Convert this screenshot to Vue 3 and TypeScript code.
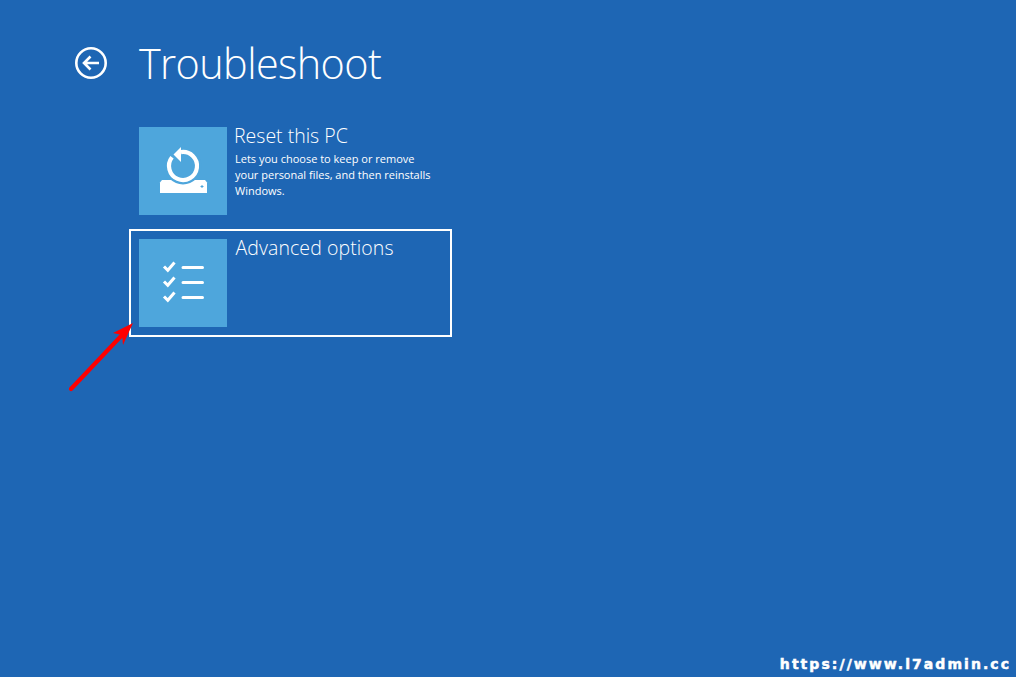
<script setup lang="ts">
interface Option {
  title: string
  description: string
  icon: 'reset' | 'advanced'
  selected: boolean
}

const options: Option[] = [
  {
    title: 'Reset this PC',
    description: 'Lets you choose to keep or remove your personal files, and then reinstalls Windows.',
    icon: 'reset',
    selected: false,
  },
  { title: 'Advanced options', description: '', icon: 'advanced', selected: true },
]
</script>

<template>
  <main class="screen">
    <header class="header">
      <svg class="back" viewBox="0 0 34 34" width="34" height="34" fill="none" stroke="#fff" stroke-width="2.6">
        <circle cx="17" cy="17" r="14.700" />
        <path d="M25 17H10M16.500 10.500 10 17l6.500 6.500" />
      </svg>
      <h1 class="title">Troubleshoot</h1>
    </header>

    <section class="options">
      <article v-for="o in options" :key="o.title" class="option" :class="{ selected: o.selected }">
        <div class="tile">
          <svg v-if="o.icon === 'reset'" viewBox="0 0 88 88" width="88" height="88">
            <path d="M23 53h43l2 2.500V66H21V55.500Z" fill="#fff" />
            <circle cx="44" cy="39" r="18.500" fill="#4ea6dc" />
            <path d="M42 25.100A14 14 0 1 1 33 30.300" fill="none" stroke="#fff" stroke-width="4.200" />
            <path d="M42 20v15l-7.500-7.500Z" fill="#fff" />
            <path d="M61.500 59.500h3M63 58v3" stroke="#4ea6dc" stroke-width="1" />
          </svg>
          <svg v-else viewBox="0 0 88 88" width="88" height="88" fill="none" stroke="#fff">
            <g stroke-width="3">
              <path d="M25 27.500l3.800 3.800 6.700-7.800" />
              <path d="M25 42.500l3.800 3.800 6.700-7.800" />
              <path d="M25 57.500l3.800 3.800 6.700-7.800" />
            </g>
            <g stroke-width="3" stroke-linecap="round">
              <path d="M44 28.500h19.500M44 43.500h19.500M44 58.500h19.500" />
            </g>
          </svg>
        </div>
        <div class="text">
          <h2 class="name">{{ o.title }}</h2>
          <p v-if="o.description" class="desc">{{ o.description }}</p>
        </div>
      </article>
    </section>

    <svg class="arrow" viewBox="0 0 70 72" width="70" height="72">
      <path d="M2 68 54 13" stroke="#f00" stroke-width="4.200" stroke-linecap="round" fill="none" />
      <path d="M64 2 44 12l9 2L54 24Z" fill="#f00" />
    </svg>

    <div class="mark">https://www.l7admin.cc</div>
  </main>
</template>

<style scoped>
.screen {
  position: relative;
  width: 1016px;
  height: 677px;
  overflow: hidden;
  background: #1e66b4;
  color: #fff;
  font-family: "Open Sans", "Noto Sans", sans-serif;
  padding: 40px 0 0 74px;
  box-sizing: border-box;
}
.header {
  display: flex;
  align-items: center;
  gap: 31px;
  height: 46px;
}
.back {
  flex: none;
}
.title {
  margin: 0;
  font-size: 41.400px;
  font-weight: 300;
  line-height: 46px;
  letter-spacing: -0.6px;
}
.options {
  display: flex;
  flex-direction: column;
  gap: 4px;
  margin: 31px 0 0 55px;
}
.option {
  box-sizing: border-box;
  width: 323px;
  height: 108px;
  padding: 8px;
  border: 2px solid transparent;
  display: flex;
  gap: 7px;
}
.option.selected {
  border-color: #fff;
}
.option.selected .name {
  padding-left: 1.500px;
  letter-spacing: 0.08px;
}
.tile {
  flex: none;
  width: 88px;
  height: 88px;
  background: #4ea6dc;
}
.tile svg {
  display: block;
}
.text {
  min-width: 0;
}
.name {
  margin: -4px 0 0;
  font-size: 19.500px;
  font-weight: 300;
  line-height: 26px;
}
.desc {
  margin: 2px 0 0 1px;
  width: 205px;
  font-size: 11px;
  line-height: 16px;
}
.arrow {
  position: absolute;
  left: 69px;
  top: 321px;
}
.mark {
  position: absolute;
  right: 5px;
  bottom: 5px;
  font-family: "DejaVu Sans", sans-serif;
  font-weight: 700;
  font-size: 14px;
  line-height: 16px;
  letter-spacing: 2.050px;
  -webkit-text-stroke: 0.5px #fff;
}
</style>
